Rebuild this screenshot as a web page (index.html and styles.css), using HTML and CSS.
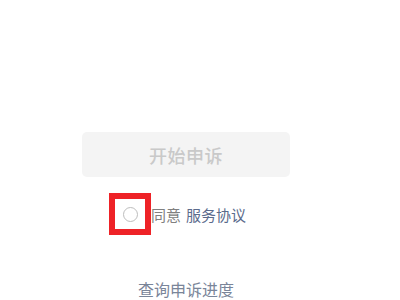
FILE: index.html
```html
<!DOCTYPE html>
<html lang="zh">
  <head>
    <meta charset="UTF-8" />
    <meta name="viewport" content="width=device-width, initial-scale=1.0" />
    <title>开始申诉</title>
    <link rel="stylesheet" href="styles.css">
  </head>
  <body>
    <div class="appeal">
      <button class="start-btn" disabled>开始申诉</button>
      <div class="agree">
        <span class="mark"><span class="radio"></span></span>
        <span class="agree-text">同意</span>
        <a class="agree-link">服务协议</a>
      </div>
      <a class="query-link">查询申诉进度</a>
    </div>
  </body>
</html>
```

FILE: styles.css
```css
* {
  margin: 0;
  padding: 0;
  box-sizing: border-box;
  font-family: "Noto Sans CJK SC", "Noto Sans", sans-serif;
}

body {
  background: #fff;
  width: 400px;
  height: 300px;
  overflow: hidden;
}

.appeal {
  display: flex;
  flex-direction: column;
  align-items: flex-start;
  padding: 132px 0 0 82px;
}

.start-btn {
  width: 208px;
  height: 45px;
  border: none;
  border-radius: 5px;
  background-color: #f4f4f4;
  color: #c9c9c9;
  font-size: 18px;
  font-weight: 500;
  letter-spacing: 0.5px;
}

.agree {
  display: flex;
  align-items: center;
  margin: 16px 0 0 27px;
  font-size: 15px;
}

.mark {
  width: 42px;
  height: 42px;
  border: 6px solid #ee2227;
  display: flex;
  justify-content: center;
  align-items: center;
}

.radio {
  width: 15px;
  height: 15px;
  border: 1px solid #bdbdbd;
  border-radius: 50%;
}

.agree-text {
  color: #808080;
  margin-right: 5px;
}

.agree-link {
  color: #5b6b8c;
}

.query-link {
  margin: 42px 0 0 56px;
  font-size: 16px;
  color: #7a8599;
}
```
